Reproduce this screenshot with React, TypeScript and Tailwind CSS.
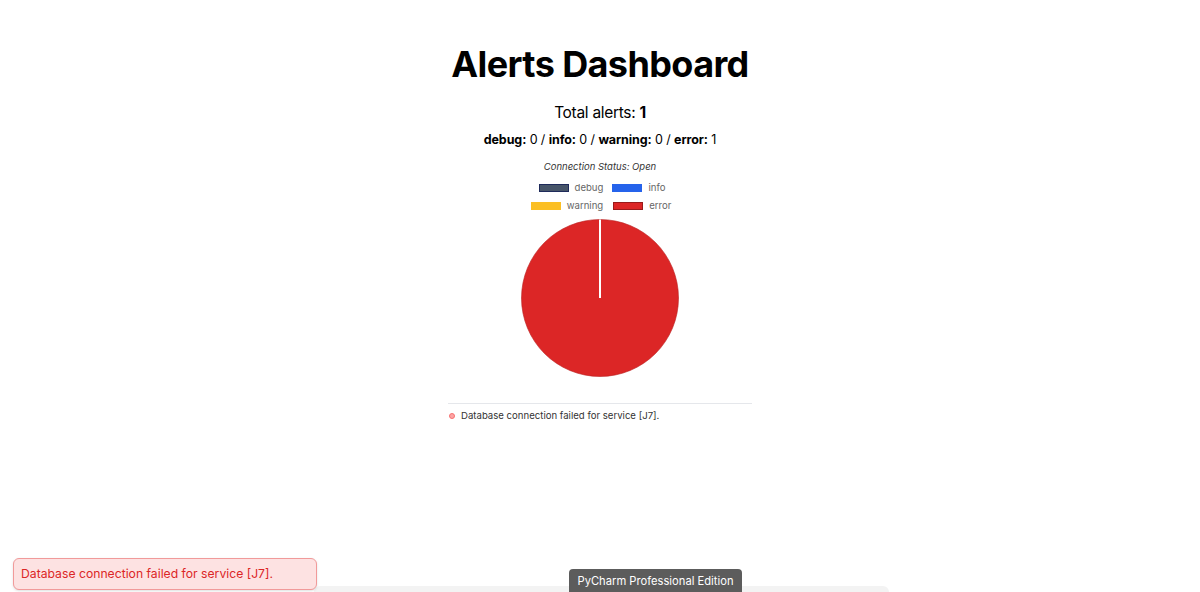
const counts = [
  { label: 'debug', value: 0 },
  { label: 'info', value: 0 },
  { label: 'warning', value: 0 },
  { label: 'error', value: 1 },
];

function LegendItem({ label, box }: { label: string; box: string }) {
  return (
    <div className="flex items-center gap-[6px]">
      <span className={`block w-[30px] h-[8px] ${box}`} />
      <span className="text-[9.6px] text-[#666]">{label}</span>
    </div>
  );
}

function Pie() {
  return (
    <svg width="160" height="160" viewBox="0 0 160 160">
      <circle cx="80" cy="80" r="78.5" fill="#dc2626" stroke="#b91c1c" strokeWidth="0.6" />
      <line x1="80" y1="1.5" x2="80" y2="80" stroke="#ffffff" strokeWidth="2" />
    </svg>
  );
}

export default function App() {
  return (
    <div
      className="relative w-[1200px] h-[592px] overflow-hidden bg-white text-black"
      style={{ fontFamily: 'Inter, "Noto Sans", sans-serif' }}
    >
      <main className="flex flex-col items-center pt-[40px]">
        <h1 className="text-[36px] font-bold leading-[48px] tracking-[-0.6px]">Alerts Dashboard</h1>

        <p className="mt-[15px] text-[15.5px] leading-[20px] tracking-[-0.3px]">
          Total alerts: <b>1</b>
        </p>

        <p className="mt-[8px] text-[12.5px] leading-[18px] tracking-[-0.1px]">
          {counts.map((c, i) => (
            <span key={c.label}>
              <b>{c.label}:</b> {c.value}
              {i < counts.length - 1 ? ' / ' : ''}
            </span>
          ))}
        </p>

        <p className="mt-[12px] text-[9.5px] italic text-[#333] leading-[12px]">Connection Status: Open</p>

        {/* chart legend */}
        <div className="mt-[7.5px] flex flex-col items-center gap-[4px]">
          <div className="flex gap-[9px] pl-[4px]">
            <LegendItem label="debug" box="bg-[#475569] border border-[#1e2a5a]" />
            <LegendItem label="info" box="bg-[#2563eb]" />
          </div>
          <div className="flex gap-[10px] pl-[2px]">
            <LegendItem label="warning" box="bg-[#fbbf24]" />
            <LegendItem label="error" box="bg-[#dc2626] border border-[#991b1b]" />
          </div>
        </div>

        <div className="mt-[5px]">
          <Pie />
        </div>

        <div className="mt-[25px] w-[304px] border-t border-[#e5e7eb]">
          <ul className="pt-[5px]">
            <li className="flex items-center gap-[6px] text-[9.6px] text-[#333] leading-[14px]">
              <span className="ml-[1px] block w-[6px] h-[6px] rounded-full bg-[#fca5a5] border border-[#f87171]" />
              Database connection failed for service [J7].
            </li>
          </ul>
        </div>
      </main>

      {/* bottom strip */}
      <div className="absolute left-[314px] bottom-0 w-[575px] h-[6px] rounded-t-md bg-[#f3f3f3]" />

      {/* toast */}
      <div className="absolute left-[13px] top-[558px] w-[304px] h-[32px] flex items-center px-[7px] rounded-md bg-[#fde2e2] border border-[#f19a9a] text-[#dc2626] text-[12.2px] shadow-sm">
        Database connection failed for service [J7].
      </div>

      {/* tooltip */}
      <div className="absolute left-[569px] top-[569px] w-[173px] h-[24px] flex items-center justify-center rounded-t-[4px] bg-[#5c5c5c] text-white text-[11.2px]">
        PyCharm Professional Edition
      </div>
    </div>
  );
}
